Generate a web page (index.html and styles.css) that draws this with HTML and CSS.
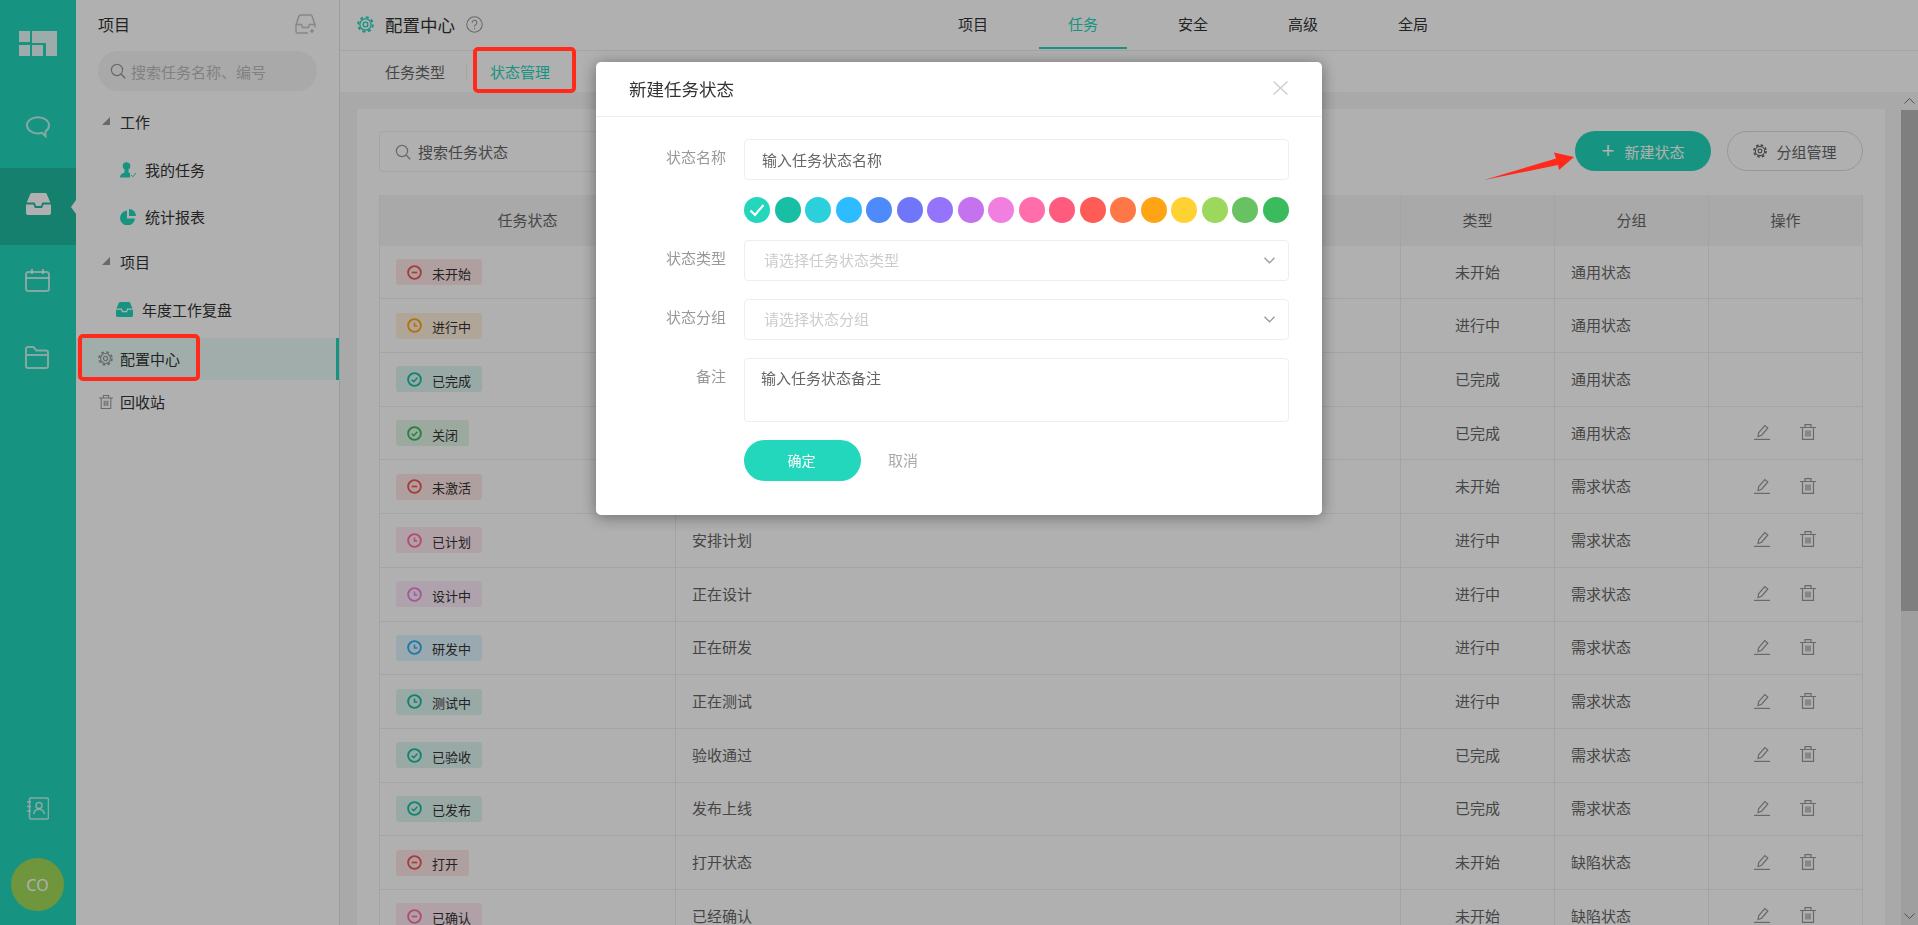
FILE: index.html
```html
<!DOCTYPE html>
<html lang="zh-CN">
<head>
    <meta charset="UTF-8">
    <meta name="viewport" content="width=device-width, initial-scale=1.0">
    <title>配置中心 - 状态管理</title>
    <link rel="stylesheet" href="styles.css">
</head>
<body>
    <svg class="sprite" width="0" height="0">
        <symbol id="i-check" viewBox="0 0 16 16"><circle cx="8" cy="8" r="6.8" fill="none" stroke="currentColor" stroke-width="2"/><path d="M5 8.2l2.2 2.1L11 6.2" fill="none" stroke="currentColor" stroke-width="1.6"/></symbol>
        <symbol id="i-clock" viewBox="0 0 16 16"><circle cx="8" cy="8" r="6.8" fill="none" stroke="currentColor" stroke-width="2"/><path d="M8 4.8v3.6h3" fill="none" stroke="currentColor" stroke-width="1.6"/></symbol>
        <symbol id="i-minus" viewBox="0 0 16 16"><circle cx="8" cy="8" r="6.8" fill="none" stroke="currentColor" stroke-width="2"/><path d="M5 8h6" fill="none" stroke="currentColor" stroke-width="1.8"/></symbol>
        <symbol id="i-gear" viewBox="0 0 16 16"><circle cx="8" cy="8" r="6.9" fill="none" stroke="currentColor" stroke-width="1.8" stroke-dasharray="2.9 2.52"/><circle cx="8" cy="8" r="5.3" fill="none" stroke="currentColor" stroke-width="1.2"/><circle cx="8" cy="8" r="2.2" fill="none" stroke="currentColor" stroke-width="1.3"/></symbol>
        <symbol id="i-search" viewBox="0 0 16 16"><circle cx="7" cy="7" r="5.6" fill="none" stroke="currentColor" stroke-width="1.2"/><path d="M11 11l4.2 4.2" fill="none" stroke="currentColor" stroke-width="1.4"/></symbol>
        <symbol id="i-edit" viewBox="0 0 16 16"><path d="M0 15.4h16" fill="none" stroke="currentColor" stroke-width="1.2"/><path d="M4 12.5l.6-3.7L10.8 1.6l3 2.4-6.200 7.200z" fill="none" stroke="currentColor" stroke-width="1.2"/></symbol>
        <symbol id="i-trash" viewBox="0 0 16 16"><path d="M0 3.500h16M5 3.500V.6h6v2.900M2.500 3.500v11.900h11V3.500M6 6.500v6M10 6.500v6M8 6.500v6" fill="none" stroke="currentColor" stroke-width="1.2"/></symbol>
        <symbol id="i-inbox" viewBox="0 0 25 22"><path d="M6 0h13a2 2 0 0 1 1.800 1.200L25 11v9a2 2 0 0 1-2 2H2a2 2 0 0 1-2-2v-9L4.200 1.200A2 2 0 0 1 6 0z" fill="currentColor"/><path d="M0 10.500h8l1.500 3.500h6l1.500-3.500h8" fill="none" stroke="var(--tray)" stroke-width="1.800"/></symbol>
    </svg>

    <div class="app">
        <aside class="rail">
            <div class="rail-logo">
                <svg width="38" height="25" viewBox="0 0 38 25" fill="currentColor"><rect width="11" height="11"/><rect y="14" width="11" height="11"/><rect x="13" y="14" width="11" height="11"/><path d="M13 0h25v25H27V12H13z"/></svg>
            </div>
            <a class="rail-item">
                <svg width="24" height="22" viewBox="0 0 24 22" fill="none" stroke="currentColor" stroke-width="2"><path d="M12 1.200C5.900 1.200 1 4.800 1 9.300s4.900 8.100 11 8.100c1.500 0 2.900-.2 4.200-.6l3.300 3.400v-4.800C21.700 14 23 11.800 23 9.300 23 4.800 18.100 1.200 12 1.200z"/></svg>
            </a>
            <a class="rail-item active">
                <svg class="tray-dark" width="25" height="22"><use href="#i-inbox"/></svg>
            </a>
            <a class="rail-item shifted">
                <svg width="25" height="23" viewBox="0 0 25 23" fill="none" stroke="currentColor" stroke-width="2"><rect x="1" y="3" width="23" height="19" rx="2.500"/><path d="M1 9h23M7 0v5M18 0v5"/></svg>
            </a>
            <a class="rail-item shifted">
                <svg width="24" height="23" viewBox="0 0 24 23" fill="none" stroke="currentColor" stroke-width="2"><path d="M1 20V3a2 2 0 0 1 2-2h5.500l3 3.500H21a2 2 0 0 1 2 2V20a2 2 0 0 1-2 2H3a2 2 0 0 1-2-2zM1 9h22"/></svg>
            </a>
            <div class="rail-bottom">
                <svg width="22" height="23" viewBox="0 0 22 23" fill="none" stroke="currentColor" stroke-width="1.600"><rect x="2.500" y="1" width="19" height="21" rx="1.500"/><path d="M0 5h4M0 9.500h4M0 14h4"/><circle cx="12" cy="8.500" r="3"/><path d="M6.500 17c.8-3 2.800-4.700 5.500-4.700s4.700 1.700 5.500 4.700"/></svg>
                <div class="avatar">CO</div>
            </div>
        </aside>

        <nav class="side">
            <div class="side-head">
                <span>项目</span>
                <svg width="21" height="20" viewBox="0 0 21 20" fill="none" stroke="currentColor" stroke-width="1.500"><path d="M1 11L4 2a1.500 1.500 0 0 1 1.400-1h10.200A1.500 1.500 0 0 1 17 2l3 9M1 11v6.500A1.500 1.500 0 0 0 2.500 19H13M1 10.500h5.500l1 3h6l1-3H20v3"/><path d="M17 15v4M15 17h4"/></svg>
            </div>
            <label class="side-search">
                <svg class="icon-16" width="16" height="16"><use href="#i-search"/></svg>
                <input type="text" placeholder="搜索任务名称、编号">
            </label>
            <div class="side-group first"><i class="tri"></i>工作</div>
            <a class="side-item sub first-sub">
                <svg width="16" height="16" viewBox="0 0 16 16"><circle cx="6.500" cy="4" r="3.800" fill="currentColor"/><path d="M0 15.500c0-3 2-4.300 4.500-5V7h4v3.500l1.500.5v4.500z" fill="currentColor"/><path d="M11 13l1.800 1.800L16 11" fill="none" stroke="currentColor"/></svg>
                我的任务
            </a>
            <a class="side-item sub">
                <svg width="16" height="16" viewBox="0 0 16 16" fill="currentColor"><path d="M7 1.500v8h8A7.500 7.500 0 1 1 7 1.500z"/><path d="M9 0a7 7 0 0 1 7 7H9z"/></svg>
                统计报表
            </a>
            <div class="side-group"><i class="tri"></i>项目</div>
            <a class="side-item project">
                <svg class="tray-light" width="17" height="15" viewBox="0 0 25 22"><use href="#i-inbox"/></svg>
                年度工作复盘
            </a>
            <a class="side-item root current">
                <svg class="icon-gray" width="15" height="15"><use href="#i-gear"/></svg>
                配置中心
            </a>
            <a class="side-item root trash">
                <svg class="icon-gray" width="14" height="14"><use href="#i-trash"/></svg>
                回收站
            </a>
        </nav>

        <main class="main">
            <header class="topbar">
                <div class="topbar-title">
                    <svg class="icon-teal" width="17" height="17"><use href="#i-gear"/></svg>
                    <span>配置中心</span>
                    <svg class="icon-help" width="17" height="17" viewBox="0 0 16 16" fill="none" stroke="currentColor"><circle cx="8" cy="8" r="7.300"/><path d="M5.800 6.300a2.200 2.200 0 1 1 3.400 1.800c-.8.500-1.200 1-1.200 1.900M8 11.200v1.200"/></svg>
                </div>
                <div class="topnav">
                    <a>项目</a>
                    <a class="active">任务</a>
                    <a>安全</a>
                    <a>高级</a>
                    <a>全局</a>
                </div>
            </header>
            <div class="subtabs">
                <a>任务类型</a>
                <i></i>
                <a class="active">状态管理</a>
            </div>
            <div class="content">
                <div class="content-inner">
                    <section class="card">
                        <div class="toolbar">
                            <label class="search">
                                <svg class="icon-gray" width="16" height="16"><use href="#i-search"/></svg>
                                <input type="text" placeholder="搜索任务状态">
                            </label>
                            <button class="btn-primary"><span class="plus">+</span>新建状态</button>
                            <button class="btn-outline"><svg width="14" height="14"><use href="#i-gear"/></svg>分组管理</button>
                        </div>
                        <div class="table">
                            <div class="row head"><div>任务状态</div><div></div><div>类型</div><div>分组</div><div>操作</div></div>
                            <div class="row"><div><span class="tag red"><svg width="15" height="15"><use href="#i-minus"/></svg>未开始</span></div><div></div><div class="mid">未开始</div><div>通用状态</div><div></div></div>
                            <div class="row"><div><span class="tag orange"><svg width="15" height="15"><use href="#i-clock"/></svg>进行中</span></div><div></div><div class="mid">进行中</div><div>通用状态</div><div></div></div>
                            <div class="row"><div><span class="tag teal"><svg width="15" height="15"><use href="#i-check"/></svg>已完成</span></div><div></div><div class="mid">已完成</div><div>通用状态</div><div></div></div>
                            <div class="row"><div><span class="tag green"><svg width="15" height="15"><use href="#i-check"/></svg>关闭</span></div><div></div><div class="mid">已完成</div><div>通用状态</div><div class="ops"><svg width="16" height="16"><use href="#i-edit"/></svg><svg width="16" height="16"><use href="#i-trash"/></svg></div></div>
                            <div class="row"><div><span class="tag red"><svg width="15" height="15"><use href="#i-minus"/></svg>未激活</span></div><div></div><div class="mid">未开始</div><div>需求状态</div><div class="ops"><svg width="16" height="16"><use href="#i-edit"/></svg><svg width="16" height="16"><use href="#i-trash"/></svg></div></div>
                            <div class="row"><div><span class="tag rose"><svg width="15" height="15"><use href="#i-clock"/></svg>已计划</span></div><div>安排计划</div><div class="mid">进行中</div><div>需求状态</div><div class="ops"><svg width="16" height="16"><use href="#i-edit"/></svg><svg width="16" height="16"><use href="#i-trash"/></svg></div></div>
                            <div class="row"><div><span class="tag violet"><svg width="15" height="15"><use href="#i-clock"/></svg>设计中</span></div><div>正在设计</div><div class="mid">进行中</div><div>需求状态</div><div class="ops"><svg width="16" height="16"><use href="#i-edit"/></svg><svg width="16" height="16"><use href="#i-trash"/></svg></div></div>
                            <div class="row"><div><span class="tag blue"><svg width="15" height="15"><use href="#i-clock"/></svg>研发中</span></div><div>正在研发</div><div class="mid">进行中</div><div>需求状态</div><div class="ops"><svg width="16" height="16"><use href="#i-edit"/></svg><svg width="16" height="16"><use href="#i-trash"/></svg></div></div>
                            <div class="row"><div><span class="tag teal"><svg width="15" height="15"><use href="#i-clock"/></svg>测试中</span></div><div>正在测试</div><div class="mid">进行中</div><div>需求状态</div><div class="ops"><svg width="16" height="16"><use href="#i-edit"/></svg><svg width="16" height="16"><use href="#i-trash"/></svg></div></div>
                            <div class="row"><div><span class="tag teal"><svg width="15" height="15"><use href="#i-check"/></svg>已验收</span></div><div>验收通过</div><div class="mid">已完成</div><div>需求状态</div><div class="ops"><svg width="16" height="16"><use href="#i-edit"/></svg><svg width="16" height="16"><use href="#i-trash"/></svg></div></div>
                            <div class="row"><div><span class="tag teal"><svg width="15" height="15"><use href="#i-check"/></svg>已发布</span></div><div>发布上线</div><div class="mid">已完成</div><div>需求状态</div><div class="ops"><svg width="16" height="16"><use href="#i-edit"/></svg><svg width="16" height="16"><use href="#i-trash"/></svg></div></div>
                            <div class="row"><div><span class="tag red"><svg width="15" height="15"><use href="#i-minus"/></svg>打开</span></div><div>打开状态</div><div class="mid">未开始</div><div>缺陷状态</div><div class="ops"><svg width="16" height="16"><use href="#i-edit"/></svg><svg width="16" height="16"><use href="#i-trash"/></svg></div></div>
                            <div class="row"><div><span class="tag rose"><svg width="15" height="15"><use href="#i-minus"/></svg>已确认</span></div><div>已经确认</div><div class="mid">未开始</div><div>缺陷状态</div><div class="ops"><svg width="16" height="16"><use href="#i-edit"/></svg><svg width="16" height="16"><use href="#i-trash"/></svg></div></div>
                        </div>
                    </section>
                </div>
                <div class="scrollbar">
                    <div class="scroll-btn top"><svg width="11" height="6" viewBox="0 0 11 6" fill="none" stroke="currentColor"><path d="M.5 5.500l5-5 5 5"/></svg></div>
                    <div class="scroll-thumb"></div>
                    <div class="scroll-btn bottom"><svg width="11" height="6" viewBox="0 0 11 6" fill="none" stroke="currentColor"><path d="M.5 .5l5 5 5-5"/></svg></div>
                </div>
            </div>
        </main>
    </div>

    <div class="overlay">
        <div class="modal">
            <div class="modal-head">
                <h2>新建任务状态</h2>
                <svg width="15" height="14" viewBox="0 0 15 14" fill="none" stroke="currentColor" stroke-width="1.300"><path d="M.5 .5l14 13M14.500 .5l-14 13"/></svg>
            </div>
            <form class="modal-body">
                <div class="form-row">
                    <label>状态名称</label>
                    <input class="field" type="text" placeholder="输入任务状态名称">
                </div>
                <div class="swatches">
                    <span class="swatch picked" style="background:#22d7bb"><svg width="16" height="14" viewBox="0 0 16 14" fill="none" stroke="#fff" stroke-width="2.200"><path d="M1.500 7.500l4.500 4.500 8.500-10"/></svg></span>
                    <span class="swatch" style="background:#18bfa4"></span>
                    <span class="swatch" style="background:#2ccfdc"></span>
                    <span class="swatch" style="background:#2cbcff"></span>
                    <span class="swatch" style="background:#4e8af9"></span>
                    <span class="swatch" style="background:#7076fa"></span>
                    <span class="swatch" style="background:#9473fd"></span>
                    <span class="swatch" style="background:#c472ee"></span>
                    <span class="swatch" style="background:#f17fe0"></span>
                    <span class="swatch" style="background:#ff6dab"></span>
                    <span class="swatch" style="background:#ff5b7e"></span>
                    <span class="swatch" style="background:#ff5b57"></span>
                    <span class="swatch" style="background:#ff7747"></span>
                    <span class="swatch" style="background:#ffa415"></span>
                    <span class="swatch" style="background:#ffd234"></span>
                    <span class="swatch" style="background:#9cd85b"></span>
                    <span class="swatch" style="background:#69c262"></span>
                    <span class="swatch" style="background:#39bb5e"></span>
                </div>
                <div class="form-row">
                    <label>状态类型</label>
                    <div class="field select">请选择任务状态类型<svg width="11" height="7" viewBox="0 0 11 7" fill="none" stroke="currentColor" stroke-width="1.300"><path d="M.5 .8l5 5 5-5"/></svg></div>
                </div>
                <div class="form-row">
                    <label>状态分组</label>
                    <div class="field select">请选择状态分组<svg width="11" height="7" viewBox="0 0 11 7" fill="none" stroke="currentColor" stroke-width="1.300"><path d="M.5 .8l5 5 5-5"/></svg></div>
                </div>
                <div class="form-row note">
                    <label>备注</label>
                    <textarea class="field" placeholder="输入任务状态备注"></textarea>
                </div>
                <div class="form-actions">
                    <button type="button" class="btn-ok">确定</button>
                    <a class="btn-cancel">取消</a>
                </div>
            </form>
        </div>

        <i class="mark mark-menu"></i>
        <i class="mark mark-tab"></i>
        <svg class="mark-arrow" width="92" height="30" viewBox="0 0 92 30"><path d="M1 29L73 7.500 71 1.500 91 6 76 19 75 14z" fill="#ff2a1a"/></svg>
    </div>
</body>
</html>
```

FILE: styles.css
```css
:root {
    --primary-color: #22d7bb;
    --text-color: #333;
    --muted-color: #666;
    --line-color: #eee;
    --page-color: #f5f5f5;
}

* {
    box-sizing: border-box;
}

body {
    margin: 0;
    height: 925px;
    overflow: hidden;
    font-family: "Noto Sans CJK SC", "Liberation Sans", sans-serif;
    font-size: 15px;
    color: var(--text-color);
    background-color: #fff;
}

a {
    color: inherit;
    text-decoration: none;
}

input,
textarea,
button {
    font-family: inherit;
    font-size: 15px;
}

svg {
    display: block;
    flex-shrink: 0;
}

.sprite {
    position: absolute;
}

.app {
    display: flex;
    height: 925px;
}

/* left rail */
.rail {
    width: 76px;
    flex-shrink: 0;
    display: flex;
    flex-direction: column;
    align-items: stretch;
    background-color: var(--primary-color);
    color: rgba(255, 255, 255, 0.72);
}

.rail-logo {
    height: 91px;
    padding: 31px 0 0 19px;
    color: rgba(255, 255, 255, 0.88);
}

.rail-item {
    position: relative;
    height: 77px;
    padding-bottom: 6px;
    display: flex;
    align-items: center;
    justify-content: center;
}

.rail-item.shifted {
    padding-right: 2px;
}

.rail-item.active {
    background-color: #1dba9f;
    color: #fff;
    --tray: #1dba9f;
}

.rail-item.active::after {
    content: '';
    position: absolute;
    right: 0;
    top: 32px;
    border: 7px solid transparent;
    border-right: 5px solid #fff;
    border-left: 0;
}

.rail-bottom {
    margin-top: auto;
    height: 128px;
    padding: 0 1px 14px 0;
    display: flex;
    flex-direction: column;
    align-items: center;
    justify-content: space-between;
}

.avatar {
    width: 53px;
    height: 53px;
    border-radius: 50%;
    background-color: #a1d859;
    color: #fff;
    font-family: "Noto Sans", sans-serif;
    font-size: 16px;
    display: flex;
    align-items: center;
    justify-content: center;
}

/* project menu */
.side {
    width: 264px;
    flex-shrink: 0;
    border-right: 1px solid #e4e4e4;
    color: var(--text-color);
}

.side-head {
    height: 51px;
    padding: 0 23px 4px 22px;
    display: flex;
    align-items: center;
    justify-content: space-between;
    font-size: 16px;
}

.side-head svg {
    color: #c4c4c4;
}

.side-search {
    height: 40px;
    margin: 0 22px;
    padding: 0 12px;
    display: flex;
    align-items: center;
    gap: 5px;
    border-radius: 20px;
    background-color: var(--page-color);
    color: #999;
}

.side-search input {
    flex: 1;
    min-width: 0;
    border: none;
    outline: none;
    padding: 0;
    background: none;
}

.side-search input::placeholder {
    color: #bbb;
}

.side-group {
    height: 40px;
    padding-left: 26px;
    display: flex;
    align-items: center;
    gap: 10px;
    margin-top: 1px;
}

.side-group.first {
    margin-top: 10px;
}

.tri {
    width: 8px;
    height: 8px;
    background-color: #999;
    clip-path: polygon(100% 0, 100% 100%, 0 100%);
}

.side-item {
    display: flex;
    align-items: center;
}

.side-item.sub {
    height: 47px;
    padding-left: 44px;
    gap: 9px;
    color: var(--text-color);
}

.side-item.sub svg,
.side-item.project svg {
    color: var(--primary-color);
}

.side-item.first-sub {
    margin-top: 5px;
}

.side-item.project {
    height: 47px;
    margin: 5px 0 5px;
    padding-left: 40px;
    gap: 9px;
    --tray: #fff;
}

.side-item.root {
    height: 46px;
    padding-left: 23px;
    gap: 7px;
}

.side-item.current {
    height: 42px;
    padding-left: 22px;
    padding-bottom: 2px;
    background-color: #e9fbf8;
    border-right: 3px solid var(--primary-color);
}

.side-item.trash {
    height: 44px;
    padding-bottom: 2px;
}

.side-item.trash svg {
    margin-top: 2px;
}

.icon-gray {
    color: #999;
}

/* main column */
.main {
    flex: 1;
    min-width: 0;
    display: flex;
    flex-direction: column;
}

.topbar {
    height: 51px;
    flex-shrink: 0;
    display: flex;
    border-bottom: 1px solid var(--line-color);
}

.topbar-title {
    width: 589px;
    padding: 0 0 2px 17px;
    display: flex;
    align-items: center;
    font-size: 17px;
}

.topbar-title span {
    margin: 0 11px;
    font-size: 17.500px;
}

.icon-teal {
    color: var(--primary-color);
}

.icon-help {
    color: #999;
}

.topnav {
    display: flex;
    gap: 22px;
}

.topnav a {
    width: 88px;
    height: 49px;
    display: flex;
    align-items: center;
    justify-content: center;
    border-bottom: 2px solid transparent;
}

.topnav a.active {
    color: var(--primary-color);
    border-bottom-color: var(--primary-color);
}

.subtabs {
    height: 41px;
    flex-shrink: 0;
    padding-left: 45px;
    display: flex;
    align-items: center;
    color: var(--muted-color);
}

.subtabs i {
    width: 1px;
    height: 18px;
    margin: 0 23px 0 21px;
    background-color: var(--line-color);
}

.subtabs a.active {
    color: var(--primary-color);
}

.content {
    flex: 1;
    min-height: 0;
    display: flex;
    background-color: var(--page-color);
}

.content-inner {
    flex: 1;
    min-width: 0;
    padding: 17px 16px 0 17px;
    overflow: hidden;
}

.card {
    padding: 22px;
    background-color: #fff;
}

.toolbar {
    height: 41px;
    margin-bottom: 23px;
    display: flex;
    align-items: flex-start;
    gap: 16px;
}

.search {
    width: 240px;
    height: 41px;
    margin-right: auto;
    padding: 0 15px;
    display: flex;
    align-items: center;
    gap: 7px;
    border: 1px solid var(--line-color);
    border-radius: 4px;
}

.search input {
    flex: 1;
    min-width: 0;
    padding: 0;
    border: none;
    outline: none;
}

.search input::placeholder {
    color: var(--muted-color);
}

.btn-primary,
.btn-outline {
    width: 136px;
    height: 40px;
    padding: 0;
    display: flex;
    align-items: center;
    justify-content: center;
    border-radius: 20px;
    cursor: pointer;
}

.btn-primary {
    gap: 10px;
    border: none;
    background-color: var(--primary-color);
    color: #fff;
}

.plus {
    font-family: "Liberation Sans", sans-serif;
    font-size: 22px;
    font-weight: normal;
    line-height: 1;
}

.btn-outline {
    gap: 9px;
    border: 1px solid #ddd;
    background-color: #fff;
    color: var(--muted-color);
}

/* status table */
.table {
    border-left: 1px solid var(--line-color);
    border-right: 1px solid var(--line-color);
}

.row {
    display: grid;
    grid-template-columns: 295px 725px 154px 154px 154px;
    height: 53.700px;
    border-bottom: 1px solid var(--line-color);
    color: var(--muted-color);
}

.row > div {
    padding: 0 16px 2px;
    display: flex;
    align-items: center;
    border-left: 1px solid var(--line-color);
}

.row > div:first-child {
    border-left: none;
}

.row > div.mid {
    justify-content: center;
}

.row.head {
    height: 50.700px;
    border-bottom: none;
    background-color: var(--page-color);
}

.row.head > div {
    justify-content: center;
}

.tag {
    height: 26px;
    margin-top: 2px;
    padding: 2px 11px 0;
    display: flex;
    align-items: center;
    gap: 10px;
    border-radius: 3px;
    font-size: 13px;
    color: var(--text-color);
}

.tag svg {
    margin-top: -2px;
}

.tag.red { background-color: rgba(255, 91, 87, 0.15); }
.tag.red svg { color: #f0575a; }
.tag.orange { background-color: rgba(255, 164, 21, 0.15); }
.tag.orange svg { color: #ffa415; }
.tag.teal { background-color: rgba(24, 191, 164, 0.15); }
.tag.teal svg { color: #18bfa4; }
.tag.green { background-color: rgba(57, 187, 94, 0.15); }
.tag.green svg { color: #39bb5e; }
.tag.rose { background-color: rgba(255, 109, 171, 0.15); }
.tag.rose svg { color: #ff6dab; }
.tag.violet { background-color: rgba(241, 127, 224, 0.15); }
.tag.violet svg { color: #ee7fe0; }
.tag.blue { background-color: rgba(44, 188, 255, 0.15); }
.tag.blue svg { color: #2cb0f5; }

.row > div.ops {
    padding-left: 45px;
    gap: 30px;
    color: #999;
}

/* fake scrollbar of the page */
.scrollbar {
    width: 17px;
    flex-shrink: 0;
    display: flex;
    flex-direction: column;
    background-color: #e6e6e6;
}

.scroll-btn {
    height: 18px;
    flex-shrink: 0;
    display: flex;
    align-items: center;
    justify-content: center;
    color: #777;
}

.scroll-btn.top {
    background-color: var(--page-color);
}

.scroll-btn.bottom {
    margin-top: auto;
}

.scroll-thumb {
    height: 501px;
    background-color: #b9b9b9;
}

/* modal */
.overlay {
    position: fixed;
    top: 0;
    left: 0;
    width: 100%;
    height: 100%;
    padding-top: 62px;
    display: flex;
    justify-content: center;
    align-items: flex-start;
    background-color: rgba(0, 0, 0, 0.31);
}

.modal {
    width: 726px;
    height: 453px;
    border-radius: 5px;
    background-color: #fff;
    box-shadow: 0 2px 16px rgba(0, 0, 0, 0.4);
}

.modal-head {
    height: 55px;
    padding: 0 34px 2px 33px;
    display: flex;
    align-items: center;
    justify-content: space-between;
    border-bottom: 1px solid var(--line-color);
    color: #ccc;
}

.modal-head h2 {
    margin: 0;
    font-size: 17.500px;
    font-weight: normal;
    color: var(--text-color);
}

.modal-body {
    padding: 22px 33px 0 0;
    display: block;
    margin: 0;
}

.form-row {
    display: flex;
    margin-bottom: 18px;
}

.form-row label {
    width: 130px;
    margin-right: 18px;
    padding-top: 7px;
    line-height: 22px;
    text-align: right;
    color: #999;
}

.field {
    flex: 1;
    height: 41px;
    min-width: 0;
    padding: 0 17px;
    border: 1px solid var(--line-color);
    border-radius: 4px;
    outline: none;
    background-color: #fff;
}

.field::placeholder {
    color: var(--muted-color);
}

.select {
    display: flex;
    align-items: center;
    justify-content: space-between;
    padding: 0 13px 2px 19px;
    color: #ccc;
}

.select svg {
    color: #999;
    margin-top: 2px;
}

.swatches {
    display: flex;
    justify-content: space-between;
    margin: -1px 0 17px 148px;
}

.swatch {
    width: 26px;
    height: 26px;
    border-radius: 50%;
    display: flex;
    align-items: center;
    justify-content: center;
}

.form-row.note {
    margin-bottom: 18px;
}

.form-row.note .field {
    height: 64px;
    padding: 8px 16px;
    resize: none;
}

.form-actions {
    margin-left: 148px;
    display: flex;
    align-items: center;
    gap: 27px;
}

.btn-ok {
    width: 117px;
    height: 41px;
    padding: 0 2px 2px 0;
    border: none;
    border-radius: 21px;
    background-color: var(--primary-color);
    color: #fff;
    font-size: 14px;
    cursor: pointer;
}

.btn-cancel {
    padding-bottom: 2px;
    color: #aaa;
}

/* red marks drawn on the screenshot */
.mark {
    position: absolute;
    border: 4px solid #ff2a1a;
    border-radius: 5px;
}

.mark-menu {
    left: 78px;
    top: 334px;
    width: 122px;
    height: 47px;
}

.mark-tab {
    left: 473px;
    top: 47px;
    width: 103px;
    height: 46px;
}

.mark-arrow {
    position: absolute;
    left: 1483px;
    top: 151px;
}
```
